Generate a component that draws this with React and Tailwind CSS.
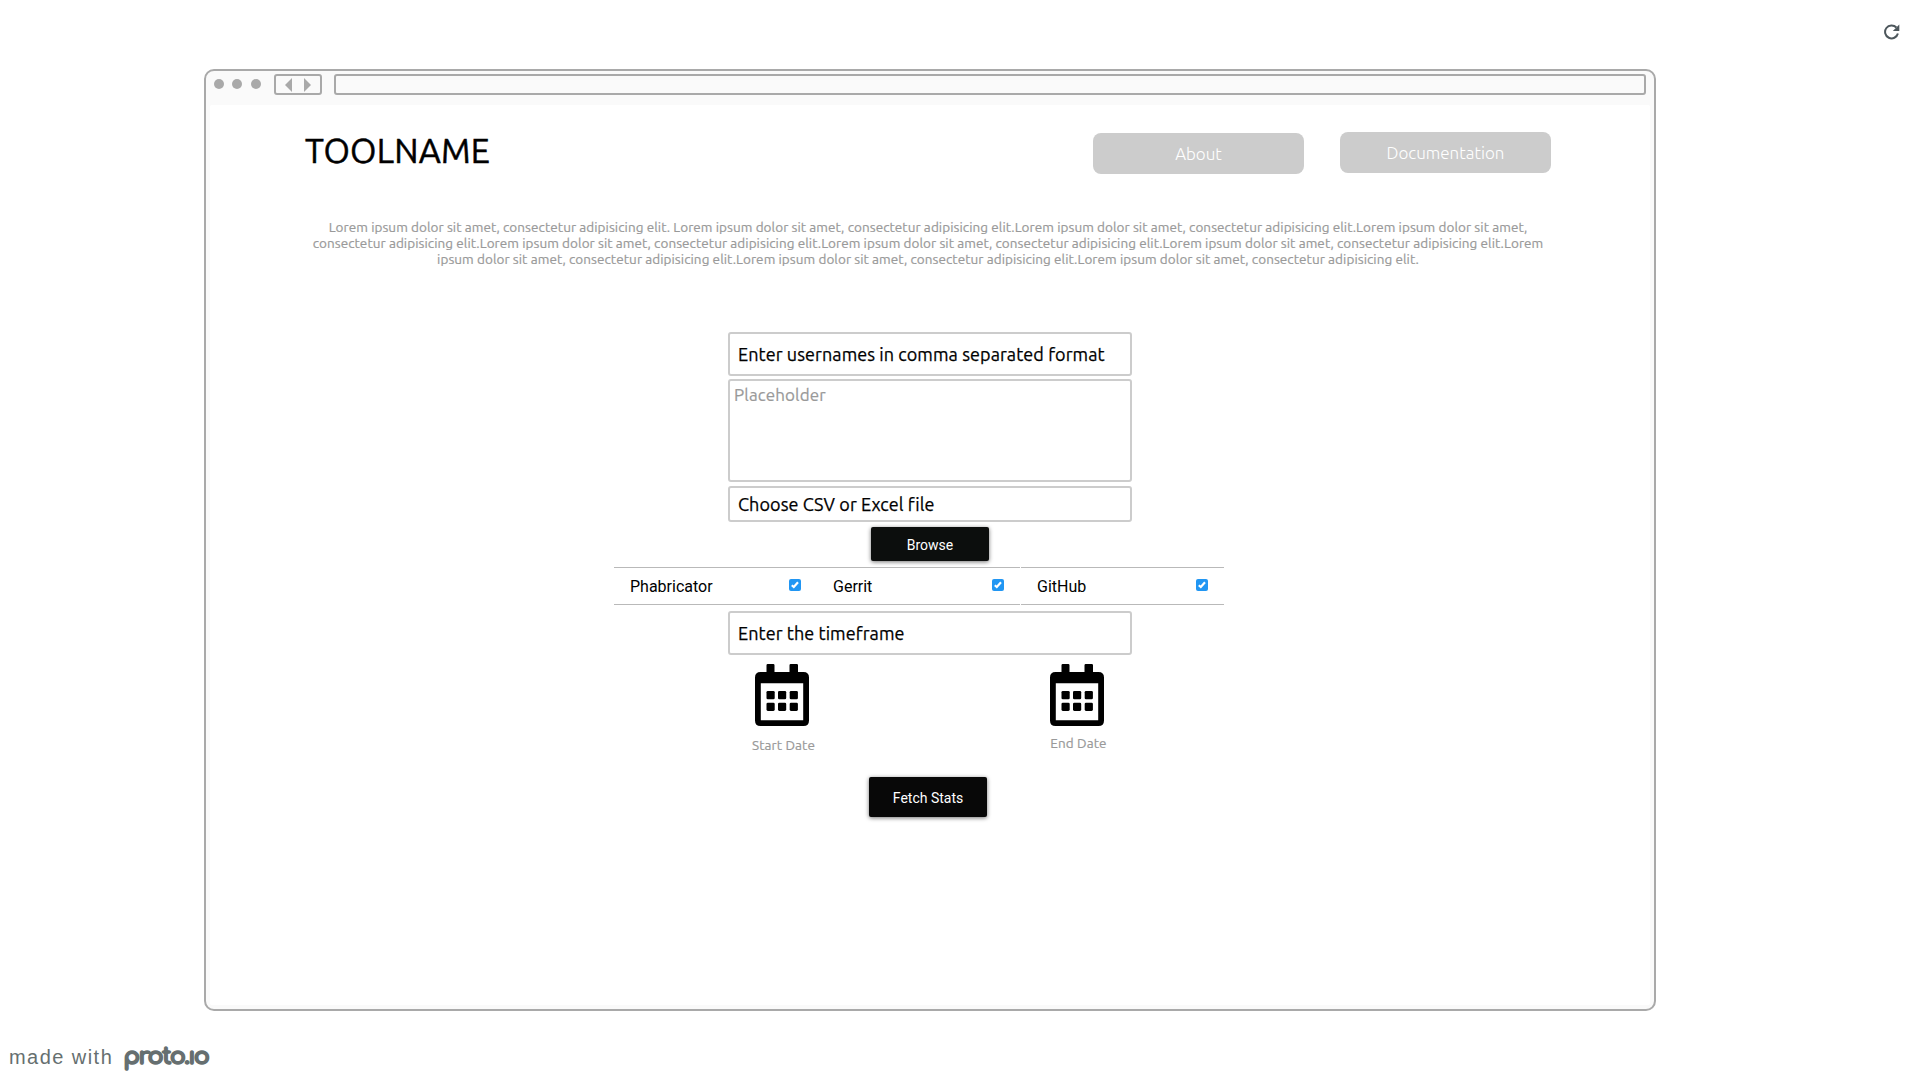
function FieldBox({ children, className }) {
  return (
    <div className={`flex w-[404px] items-center rounded-[3px] border-2 border-[#ccc] bg-white pl-2 pt-px font-['Ubuntu','Noto_Sans',sans-serif] text-[18px] tracking-[0.08px] text-black [-webkit-text-stroke:0.25px_black] ${className}`}>
      {children}
    </div>
  );
}

function CheckCell({ label, className }) {
  return (
    <div className={`flex h-[38px] items-center justify-between border-y border-[#b9b9b9] pl-4 pr-4 ${className}`}>
      <span className="pt-px font-['Roboto',sans-serif] text-base leading-5 text-black">{label}</span>
      <span className="mb-0.5 flex h-3 w-3 items-center justify-center rounded-[2px] bg-[#2196f3]">
        <svg width="8" height="8" viewBox="0 0 8 8" fill="none" stroke="#fff" strokeWidth="2.200">
          <path d="M.8 4.200 2.800 6 7 1.300" />
        </svg>
      </span>
    </div>
  );
}

function Calendar() {
  return (
    <svg width="54" height="62" viewBox="0 0 54 62" fill="#000">
      <path fillRule="evenodd" d="M11.500 8V1.200Q11.500 0 12.700 0H18.300Q19.500 0 19.500 1.200V8H34.500V1.200Q34.500 0 35.700 0H41.800Q43 0 43 1.200V8H48.500Q54 8 54 13.500V56.500Q54 62 48.500 62H5.500Q0 62 0 56.500V13.500Q0 8 5.500 8ZM5.800 19.300V56.200H48.200V19.300Z" />
      {[27, 38.7].map((y) => [11.5, 23, 34.7].map((x) => <rect key={`${x}-${y}`} x={x} y={y} width="8.200" height="8.200" rx="1.300" />))}
    </svg>
  );
}

export default function App() {
  return (
    <div className="flex h-[1080px] w-[1920px] flex-col overflow-hidden bg-white">
      <div className="flex h-[69px] shrink-0 justify-end pr-[20px] pt-[24px]">
        <svg width="16" height="16" viewBox="0 0 16 16" fill="none">
          <path d="M13.900 9.500A6.500 6.500 0 1 1 12.400 3.500" stroke="#4d575c" strokeWidth="2" />
          <path d="M15.300 .5V7H8.800Z" fill="#4d575c" />
        </svg>
      </div>
      <div className="ml-[204px] flex h-[942px] w-[1452px] shrink-0 flex-col rounded-[10px] border-2 border-[#a9a9a9] bg-[#fafafa] px-1 pb-1">
        <div className="flex h-[34px] shrink-0 pl-1 pt-[3px]">
          <div className="mt-[5px] flex w-[60px]">
            <i className="mr-2 h-2.5 w-2.5 rounded-full bg-[#a9a9a9]" />
            <i className="mr-[9px] h-2.5 w-2.5 rounded-full bg-[#a9a9a9]" />
            <i className="h-2.5 w-2.5 rounded-full bg-[#a9a9a9]" />
          </div>
          <div className="flex h-[21px] w-12 items-center justify-center gap-3 rounded-[3px] border-2 border-[#a9a9a9]">
            <svg width="7" height="14" viewBox="0 0 7 14" fill="#a9a9a9"><path d="M7 0V14L0 7Z" /></svg>
            <svg width="7" height="14" viewBox="0 0 7 14" fill="#a9a9a9"><path d="M0 0V14L7 7Z" /></svg>
          </div>
          <div className="ml-3 h-[21px] w-[1312px] rounded-[3px] border-2 border-[#a9a9a9]" />
        </div>
        <div className="flex grow flex-col rounded-[2px] bg-white">
          <header className="flex h-[70px] pl-[95px] pt-[27px]">
            <h1 className="mt-[-1px] w-[788px] whitespace-nowrap font-['Ubuntu','Noto_Sans',sans-serif] text-[34px] leading-[39px] tracking-[0.2px] text-black [-webkit-text-stroke:0.5px_black]">TOOLNAME</h1>
            <div className="mt-px flex h-[41px] w-[211px] items-center justify-center rounded-lg bg-[#ccc] font-['Ubuntu','Noto_Sans',sans-serif] text-[17px] font-light text-white">About</div>
            <div className="ml-9 flex h-[41px] w-[211px] items-center justify-center rounded-lg bg-[#ccc] font-['Ubuntu','Noto_Sans',sans-serif] text-[17px] font-light text-white">Documentation</div>
          </header>
          <div className="mt-[44px] flex h-12 w-[1436px] flex-col items-center whitespace-nowrap font-['Ubuntu','Noto_Sans',sans-serif] text-[13.500px] leading-4 tracking-[0.07px] text-[#999] [-webkit-text-stroke:0.2px_#999]">
            <span>Lorem ipsum dolor sit amet, consectetur adipisicing elit. Lorem ipsum dolor sit amet, consectetur adipisicing elit.Lorem ipsum dolor sit amet, consectetur adipisicing elit.Lorem ipsum dolor sit amet,</span>
            <span>consectetur adipisicing elit.Lorem ipsum dolor sit amet, consectetur adipisicing elit.Lorem ipsum dolor sit amet, consectetur adipisicing elit.Lorem ipsum dolor sit amet, consectetur adipisicing elit.Lorem</span>
            <span>ipsum dolor sit amet, consectetur adipisicing elit.Lorem ipsum dolor sit amet, consectetur adipisicing elit.Lorem ipsum dolor sit amet, consectetur adipisicing elit.</span>
          </div>
          <div className="ml-[404px] mt-[65px] flex w-[610px] flex-col">
            <FieldBox className="ml-[114px] h-11">Enter usernames in comma separated format</FieldBox>
            <div className="ml-[114px] mt-[3px] h-[103px] w-[404px] rounded-[3px] border-2 border-[#ccc] pl-1 pt-0.5 font-['Ubuntu','Noto_Sans',sans-serif] text-[17px] leading-6 tracking-[0.12px] text-[#999] [-webkit-text-stroke:0.2px_#999]">Placeholder</div>
            <FieldBox className="ml-[114px] mt-1 h-9">Choose CSV or Excel file</FieldBox>
            <button className="ml-[257px] mt-[5px] h-[34px] w-[118px] rounded-[2px] bg-[#0c0e0d] pt-0.5 font-['Roboto',sans-serif] text-sm text-white shadow-[0_1px_4px_rgba(0,0,0,0.55)]">Browse</button>
            <div className="mt-1.5 flex h-[38px]">
              <CheckCell label="Phabricator" className="w-[203px]" />
              <CheckCell label="Gerrit" className="w-[203px]" />
              <CheckCell label="GitHub" className="ml-px w-[203px]" />
            </div>
            <FieldBox className="ml-[114px] mt-1.5 h-11">Enter the timeframe</FieldBox>
            <div className="ml-[138px] mt-[9px] flex h-[113px] font-['Ubuntu','Noto_Sans',sans-serif] text-[13.500px] leading-4 tracking-[0.1px] text-[#999] [-webkit-text-stroke:0.2px_#999]">
              <div className="flex w-[63px] flex-col items-center">
                <span className="mr-[3px]"><Calendar /></span>
                <span className="mt-[11px] whitespace-nowrap">Start Date</span>
              </div>
              <div className="ml-[233px] flex w-[61px] flex-col items-center">
                <span className="mr-[3px]"><Calendar /></span>
                <span className="mt-[9px] whitespace-nowrap">End Date</span>
              </div>
            </div>
            <button className="ml-[255px] h-10 w-[118px] rounded-[2px] bg-[#080808] pt-0.5 font-['Roboto',sans-serif] text-sm text-white shadow-[0_1px_4px_rgba(0,0,0,0.55)]">Fetch Stats</button>
          </div>
        </div>
      </div>
      <footer className="flex items-baseline pl-[9px] pt-[28px] text-[#666f70]">
        <span className="font-['Liberation_Sans',sans-serif] text-[20px] tracking-[1.450px]">made with</span>
        <span aria-label="proto.io" className="ml-[10px] font-['Comfortaa','Lato',sans-serif] text-[24px] font-bold tracking-[-1.700px] [-webkit-text-stroke:1.600px_#666f70]">proto.ıo</span>
      </footer>
    </div>
  );
}
